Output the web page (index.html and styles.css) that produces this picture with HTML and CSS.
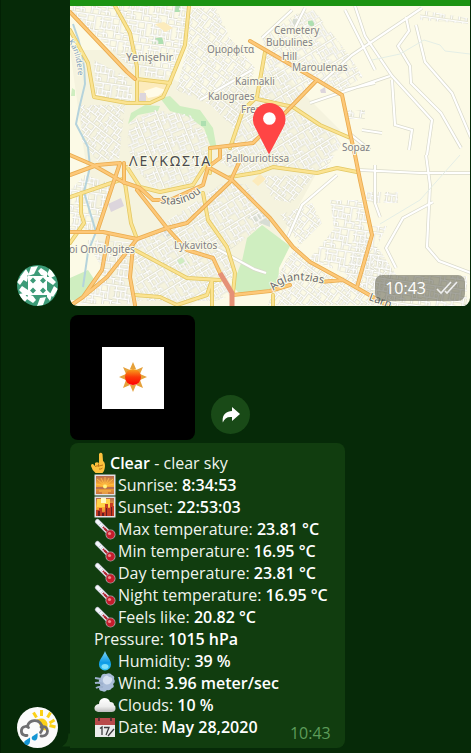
FILE: index.html
```html
<!DOCTYPE html>
<html lang="en">
<head>
<meta charset="utf-8">
<meta name="viewport" content="width=device-width, initial-scale=1">
<title>Weather chat</title>
<link rel="stylesheet" href="styles.css">
</head>
<body>
<svg class="defs" aria-hidden="true">
  <defs>
    <linearGradient id="sky" x1="0" y1="0" x2="0" y2="1"><stop offset="0" stop-color="#b5694f"/><stop offset=".5" stop-color="#ffb02e"/><stop offset="1" stop-color="#c7723e"/></linearGradient>
    <linearGradient id="sunGrad" x1="0" y1="0" x2="0" y2="1"><stop offset="0" stop-color="#f7a51c"/><stop offset=".5" stop-color="#fb3a08"/><stop offset="1" stop-color="#f00"/></linearGradient>
    <linearGradient id="dropGrad" x1="0" y1="0" x2="0" y2="1"><stop offset="0" stop-color="#7fd6f7"/><stop offset=".6" stop-color="#0d9be6"/><stop offset="1" stop-color="#35c3f5"/></linearGradient>
    <linearGradient id="cloudGrad" x1="0" y1="0" x2="0" y2="1"><stop offset="0" stop-color="#fff"/><stop offset=".6" stop-color="#ededed"/><stop offset="1" stop-color="#bdbdbd"/></linearGradient>
    <symbol id="thermo" viewBox="0 0 22 22">
      <path d="M3.500 3.500 14 14" stroke="#b8bcc6" stroke-width="5" stroke-linecap="round"/>
      <path d="M3.500 3.500 14 14" stroke="#f4f6fb" stroke-width="3.600" stroke-linecap="round"/>
      <path d="M9 9l6 6" stroke="#b3202d" stroke-width="2.200"/>
      <path d="M5 7l2-2M7 9l2-2M9 11l2-2" stroke="#b9bfd0" stroke-width=".7"/>
      <circle cx="16.500" cy="16.500" r="5" fill="#a9a3a8"/><circle cx="16.500" cy="16.500" r="4.200" fill="#c51c2c"/>
      <circle cx="15.500" cy="15.500" r="1.600" fill="#f08a8c"/>
    </symbol>
  </defs>
</svg>
<main class="chat">
  <section class="group">
    <svg class="avatar" viewBox="0 0 41 41" role="img" aria-label="User avatar">
      <clipPath id="round"><circle cx="20.500" cy="20.500" r="20.500"/></clipPath>
      <g clip-path="url(#round)">
        <path fill="#3d9b78" d="M0 0h41v41H0z"/>
        <g fill="#fff">
          <path d="M11 11h19v19H11z"/>
          <path d="M14 2l7-1-4 8-6 2zM24 3l6 4 0 5-6-2-3-4zM33 3l5 8-5 2-3-4zM9 4l3 5-5 5-4-2zM29 12h5l5 5-3 3-6-4zM37 21l4 3-5 8-3-3zM30 25l5 5-2 6-3-4zM26 40l-6 1 3-8 6-1zM16 38l-6-4 1-5 5 2 3 4zM7 38l-5-9 5-1 4 5zM11 30H7l-5-5 3-4 6 4zM3 20l-3-3 5-7 3 3zM10 17l-5-3 3-6 3 4z"/>
        </g>
        <path fill="#3d9b78" d="M16 12.500l3 3-3 3-3-3zM26 12.500l3 3-3 3-3-3zM16 22.500l3 3-3 3-3-3zM26 22.500l3 3-3 3-3-3z"/>
      </g>
    </svg>
    <div class="stack">
      <figure class="location">
        <svg class="map" viewBox="70 6 400 300" preserveAspectRatio="xMidYMid slice" role="img" aria-label="Map of Nicosia">
          <defs>
            <pattern id="st" width="30" height="26" patternUnits="userSpaceOnUse">
              <path d="M0 2h30M0 7h14M14 11h10M0 16h18M18 20h12M0 22h10M3 2v14M9 7v9M14 2v14M19 11v15M6 16v10M24 2v18M10 22v6M28 20v6" fill="none" stroke="#d3d3c2" stroke-width="3"/>
              <path d="M0 2h30M0 7h14M14 11h10M0 16h18M18 20h12M0 22h10M3 2v14M9 7v9M14 2v14M19 11v15M6 16v10M24 2v18M10 22v6M28 20v6" fill="none" stroke="#fff" stroke-width="1.700"/>
            </pattern>
            <pattern id="st1" href="#st" patternTransform="rotate(8) scale(.85)"/>
            <pattern id="st2" href="#st" patternTransform="rotate(-32) scale(.8)"/>
            <pattern id="st3" href="#st" patternTransform="rotate(38) scale(.75)"/>
            <pattern id="st4" href="#st" patternTransform="rotate(68) scale(.8)"/>
            <path id="minor" d="M355 6l10 30 27 40 40 44-5 35M422 8l-70 47-30 27M406 17l3 14-11 15 12 20 1 17 30 30 20 35M416 25l9 37 27 31 19 45M350 140v-6l20 16M310 103l80-27M426 155l4 30-3 62 12 14 32 12M360 170l60 3 50 0M433 202l-30 16-17 30 10 20M392 80l3 45 17 5-3 20M375 165v38l5 14M200 100l52-30M362 130l20 3M345 90l30-7M210 245l44 24 12 4M337 175l-35 30-14 32M345 10l30 60M262 38l30-28M305 8l-10 20"/>
            <path id="yellow" d="M115 6l15 27 7 34v35M189 6l-4 39-15 37-7 15-13 6h-23l-33-6-6-34-18-33M137 79l33 4M265 52l-8 45-14 13-13 38M257 99l36 8 27 18 28 12M127 167l13 20 20 5 33-7 14-22M125 183l6 40 6 16M135 250l52 28 33 2M135 295l25 2 17 8 30-10 5-15v26M203 193l5 27 19 27 8 26-2 20M230 177l30-5 13-5 44 6 20-5 20 4M70 197l53-18M81 193l0 20 3 10-14 20M210 148v25M273 295v11"/>
            <path id="orange" d="M70 12l57 60 8 7M250 41l67 39 25 15 8 38 5 22 5 25 12 55-15 52M210 148l43-5 10-10 22-20 32-33M70 175l27-10 23-2M70 155l23 10 30 17 17 6 13 12h17l33-15 5-18 12-9v-8M120 163l-23 69M124 163v20M70 232h33l34 7 30-11 20-5 43-41 12-26M137 190l30 38 20 22 26 8 7 15M137 239l-30 38-24 20-13 9M108 237l-6 33-19 27M133 247l-3 30 5 28M208 167l24 13 38 38 23 29 17 15 33 18 30 17 17 10M233 295l37-4 20-6M320 282l23-2"/>
            <path id="curve1" d="M160 203q24 6 44-13"/>
            <path id="curve2" d="M274 291q12-17 50-7"/>
            <path id="curve3" d="M368 300q14 5 24 9"/>
            <path id="curve4" d="M68 42q10 12 10 38"/>
          </defs>
          <path fill="#fcfae6" d="M70 6h400v300H70z"/>
          <path fill="#f5f3de" d="M70 50h60l75 50 75-30 60 60-60 110-90 66H110L95 230z"/>
          <g fill="#cfeec0">
            <path d="M247 238l15-13 28 21-11 22-1 20-38 6-8-8 10-25z"/>
            <path d="M70 278l18-8 10 15-20 15h-8zM160 98l10-2 10 10 20 4 13 18 4 22-6-2-7-20-17-12-17-5zM131 113l14-8 15 1-2 5-20 4-10 9zM175 262l6-5 9 6-9 4zM72 88l3 2v6h-4z"/>
            <path fill="#addfb0" d="M152 44v-5l10-2 2 7zM174 6h6v6h-7zM308 26v-5l6-1v6zM201 121h5v5h-5z"/>
          </g>
          <path fill="#d7ddd4" d="M247 218l12-7 11 8v8zM293 19l8-3v9l-9 1zM161 231l7-2 2 7-6 1z"/>
          <g>
            <path fill="url(#st1)" d="M70 6h44l16 28 6 38L72 13zM94 60l38 20v22l-36-6zM118 6h70l-4 39-14 35-30-5z"/>
            <path fill="url(#st3)" d="M190 8h26l14 30 25 30-12 40-8 22-24-25-35-15 12-43zM80 105l45 0-6 54-22 2-15-20z"/>
            <path fill="url(#st2)" d="M262 38l34-24 18-4 35 45 14 22-22 14-75-40zM264 50l51 30-27 30-30-14zM240 115l18-12 35 8 50 30-18 30-45-4-38 8-25-15 16-20z"/>
            <path fill="url(#st4)" d="M130 122l25-12 35 5 18 22 0 30-20 20-34 1-21-22-6-24z"/>
            <path fill="url(#st2)" d="M140 194l26 28 55-38 25 0 23 35-22 18-18 14 6 44-20 6h-78l-4-60 30-14z"/>
            <path fill="url(#st1)" d="M70 190l15-15 30 10-19 45H70zM86 240l48 2-4 62H80l23-34z"/>
            <path fill="url(#st3)" d="M262 176l52-1-22 28-20-4zM280 215l32-12 10 20-22 22zM286 260l12-14 12 18 30 18 24-50 32 48 0 25H268l6-20z"/>
            <path fill="url(#st1)" d="M330 200h32l9 35-12 44-50-20 25-30zM345 110h20v9h-18zM366 192h32v11h-32zM420 10l48 8v6l-48-4zM372 226h15l-10 20 20 30h70v30h-90l-15-20z"/>
          </g>
          <path fill="#fcebbc" d="M139 81l29 3-7 14-14 3-8-6zM155 24l9-2 9 6-8 4zM252 181l8-7 6 5-8 7z"/>
          <path fill="#fffbe8" d="M144 91l12-4 10 3-8 6-10 2z"/>
          <path fill="#dcd5dc" d="M140 93h6v8h-7zM320 90l5-3 1 6h-5zM108 204l13-6 3 8-13 6z"/>
          <g fill="none">
            <use href="#minor" stroke="#dadacb" stroke-width="3.600"/>
            <use href="#minor" stroke="#fff" stroke-width="2.200"/>
          </g>
          <path fill="none" stroke="#b5d3dc" stroke-width="2" d="M73 24q12 30 12 60l-6 25-3 15 12 23 2 20-6 25 12 40-8 20-5 35"/>
          <path fill="none" stroke="#e4eee6" d="M470 54l-25-3-5-6-16-5-24 14-28 6M460 155l-40 45-40 24"/>
          <g fill="none" stroke-linejoin="round" stroke-linecap="round">
            <use href="#yellow" stroke="#e3c864" stroke-width="4"/>
            <use href="#yellow" stroke="#fbe391" stroke-width="2.400"/>
            <use href="#orange" stroke="#e9ac4f" stroke-width="4"/>
            <use href="#orange" stroke="#fdc878" stroke-width="2.400"/>
            <path stroke="#e59176" stroke-width="5" stroke-linecap="butt" d="M220 273l6 10 6 10v13"/>
          </g>
          <g class="labels">
            <text class="town" x="126" y="61">Yenişehir</text><text x="207" y="53">Ομορφίτα</text>
            <text x="274" y="34">Cemetery</text><text x="266" y="46">Bubulines</text><text x="282" y="60">Hill</text><text x="292" y="71">Maroulenas</text>
            <text x="235" y="85">Kaimakli</text><text x="208" y="100">Kalograes</text><text x="241" y="113">Frenek</text>
            <text x="342" y="151">Sopaz</text><text x="226" y="162">Pallouriotissa</text>
            <text x="174" y="249">Lykavitos</text><text x="69" y="253">oi Omologites</text>
            <text class="city" x="129" y="166">ΛΕΥΚΩΣΊΑ</text>
            <text class="street"><textPath href="#curve1">Stasinou</textPath></text>
            <text class="street"><textPath href="#curve2">Aglantzias</textPath></text>
            <text class="street"><textPath href="#curve3">Larn</textPath></text>
            <text class="river"><textPath href="#curve4">Kanlıdere</textPath></text>
          </g>
          <path fill="#ff4545" d="M269 154.500l-13.600-26.500a16.300 16.300 0 1 1 27.600 0z"/>
          <circle cx="269.400" cy="118.500" r="6.300" fill="#fff"/>
        </svg>
        <figcaption class="stamp"><time>10:43</time>
          <svg class="ticks" viewBox="0 0 22 14" aria-hidden="true"><path d="M1 8l4 4L15 1M9 10l2 2L21 1" fill="none" stroke="#eee" stroke-width="1.600"/></svg>
        </figcaption>
      </figure>
    </div>
  </section>
  <section class="group">
    <svg class="avatar" viewBox="0 0 41 41" role="img" aria-label="Weather bot avatar">
      <circle cx="20.500" cy="20.500" r="20.500" fill="#fbfbfb"/>
      <path d="M16.500 5.500l3 5M24.500 3v6M33.500 5.500l-3 5M37.500 13l-5 3" fill="none" stroke="#fcd116" stroke-width="3"/>
      <path d="M38.500 20l-6-1.500" stroke="#fcd116" stroke-width="3"/>
      <path fill="#fcd116" d="M20 12.500q8-3 10.500 4 .5 4-1.500 7l-5-1-2-6z"/>
      <path d="M10 28.500H8a4.600 4.600 0 0 1 0-9q2-.5 3.500 1M10.500 19a7.500 7.500 0 0 1 14-1q2 4-1 7.500M24 20c4-1.500 6.500 1 6.500 4 0 4-3 5.500-6.500 5" fill="none" stroke="#6f6f72" stroke-width="2.800" stroke-linecap="round"/>
      <path fill="#1495d3" d="M20.500 26c.5 5-.5 7.500-3 7.500s-4-3-1.500-4.500zM13 30.500c.5 5-.5 7.500-3 7.500s-4-3-1.500-4.500z"/>
    </svg>
    <div class="stack">
      <div class="sticker-row">
        <div class="sticker">
          <svg class="sun" viewBox="0 0 62 62" role="img" aria-label="Sun">
            <path fill="#fff" d="M0 0h62v62H0z"/>
            <path fill="#e5a13b" d="M31 15l3 7h-6zM31 45l3-7h-6zM17 30l7-3v6zM45 30l-7-3v6zM21 20l7 3-4 4zM41 20l-3 7-4-4zM21 41l3-8 4 5zM41 41l-3-8-4 5z"/>
            <circle cx="31" cy="30" r="8" fill="url(#sunGrad)"/>
          </svg>
        </div>
        <button class="share" type="button" aria-label="Forward">
          <svg viewBox="0 0 18 16" aria-hidden="true"><path fill="#fff" d="M10 0l8 7-8 7v-4C5 9.500 2.500 11.500.800 15.500-.300 8 4 4.300 10 4z"/></svg>
        </button>
      </div>
      <article class="bubble">
        <svg class="tail" viewBox="0 0 10 16" aria-hidden="true"><path fill="#113d0f" d="M10 0v16H0q8-4 8-16z"/></svg>
        <p class="line lead"><svg class="emoji hand" viewBox="0 0 20 22" aria-hidden="true"><path fill="#fdc13c" d="M9 11V2q1.800-2.500 3.500 0L13 9q2 1 2 5-.3 5-2.500 7H5.500Q2 18 1 14q0-2.500 2-2l2 2V11q2-1.500 4 0z"/><path d="M5 14.500q2-1 4-.5l4-1M8.500 11.500v3M9 17q2 .5 3.500-1" fill="none" stroke="#bf7417" stroke-width="1"/></svg><b>Clear</b> - clear sky</p>
        <p class="line"><svg class="emoji" viewBox="0 0 22 22" aria-hidden="true"><path fill="#e3dfe5" d="M.500.500h21v21H.500z"/><path fill="url(#sky)" d="M2 2h18v18H2z"/><path d="M11 12L3 5M11 12l-4-8M11 12V3M11 12l4-8M11 12l8-7M11 12l9-2M11 12L2 10" stroke="#ffc14d" stroke-width=".8"/><path fill="#b9704f" d="M2 13h18v2H2z"/><circle cx="11" cy="12.500" r="2" fill="#fff480"/><path d="M5 17h12M8 19h6" stroke="#ffc34e"/></svg>Sunrise: <b>8:34:53</b></p>
        <p class="line"><svg class="emoji" viewBox="0 0 22 22" aria-hidden="true"><path fill="#e3dfe5" d="M.500.500h21v21H.500z"/><path fill="url(#sky)" d="M2 2h18v18H2z"/><path fill="#ffd34a" d="M3 3h13v8H3z"/><path fill="#fff9bf" d="M7 2h5v5H7z"/><path fill="#c43a24" d="M2 14h3v-2h3v4h3V8h3v4h2V7h3v3h1v10H2z"/><path fill="#651e20" d="M4 15h2v5H4zM12 12h1v8h-1zM17 11h1v9h-1zM8 17h2v3H8z"/></svg>Sunset: <b>22:53:03</b></p>
        <p class="line"><svg class="emoji" aria-hidden="true"><use href="#thermo"/></svg>Max temperature: <b>23.81 °C</b></p>
        <p class="line"><svg class="emoji" aria-hidden="true"><use href="#thermo"/></svg>Min temperature: <b>16.95 °C</b></p>
        <p class="line"><svg class="emoji" aria-hidden="true"><use href="#thermo"/></svg>Day temperature: <b>23.81 °C</b></p>
        <p class="line"><svg class="emoji" aria-hidden="true"><use href="#thermo"/></svg>Night temperature: <b>16.95 °C</b></p>
        <p class="line"><svg class="emoji" aria-hidden="true"><use href="#thermo"/></svg>Feels like: <b>20.82 °C</b></p>
        <p class="line">Pressure: <b>1015 hPa</b></p>
        <p class="line"><svg class="emoji" viewBox="0 0 22 22" aria-hidden="true"><path fill="url(#dropGrad)" d="M11 1c2 6 6 8 6 13.500a6 6 0 0 1-12 0C5 9 9 7 11 1z"/><ellipse cx="11" cy="16.500" rx="3.500" ry="2.500" fill="#7fe0fb"/></svg>Humidity: <b>39 %</b></p>
        <p class="line"><svg class="emoji" viewBox="0 0 22 22" aria-hidden="true"><path fill="#a9bcd8" d="M7 5q1-4 5-3 4-2 6 1 3 1 2 4 2 3-1 5 2 3-1 4-2 3-5 2-2 3-5 1-3 0-3-3 2-2 1-4-3-3 1-7z"/><path fill="#d5e0f0" d="M10 5q3-3 5 0 4 0 3 4-3 5-7 3-4-3-1-7z"/><path d="M1 6l6 1M1 11q4-1 8 1M2 16q3-2 7-1" fill="none" stroke="#9db0cd" stroke-width="2"/></svg>Wind: <b>3.96 meter/sec</b></p>
        <p class="line"><svg class="emoji" viewBox="0 0 22 22" aria-hidden="true"><path fill="url(#cloudGrad)" d="M4 18q-4-1-3.500-4.500Q1.500 10 5 10q0-5 5-6 5 0 6 4 4 0 4 3 2 1 1.500 4-.5 3-4 3z"/></svg>Clouds: <b>10 %</b></p>
        <p class="line"><svg class="emoji" viewBox="0 0 22 22" aria-hidden="true"><path fill="#ececec" d="M1 2h20v19H1z"/><path fill="#b84a4a" d="M1 2h20v7H1z"/><path d="M5 1v4M17 1v4" stroke="#41292c" stroke-width="1.600"/><path d="M6 12.500l2-1.500v8M10 11.500h5l-3 7.500M14 20l6-7" fill="none" stroke="#3d3d3f" stroke-width="1.300"/></svg>Date: <b>May 28,2020</b></p>
        <time class="sent">10:43</time>
      </article>
    </div>
  </section>
</main>
</body>
</html>
```
FILE: styles.css
```css
* { box-sizing: border-box; }

body {
  margin: 0;
  background: #062a08;
  color: #f0f4ee;
  font: 16px/22px "Open Sans", "Noto Sans", sans-serif;
}

.defs { position: absolute; width: 0; height: 0; }

.chat {
  display: flex;
  flex-direction: column;
  gap: 9px;
  padding: 0 1px 5px 0;
  border-left: 1px solid #032005;
}

.group {
  display: flex;
  align-items: flex-end;
  gap: 12px;
  padding-left: 16px;
}

.avatar { flex: none; width: 41px; height: 41px; }

.stack { flex: 1; min-width: 0; }

.location {
  position: relative;
  max-width: 400px;
  margin: 0;
  border-top: 6px solid #1c9312;
  border-radius: 0 0 8px 8px;
  overflow: hidden;
}

.map { display: block; width: 100%; aspect-ratio: 4 / 3; }

.labels {
  font: 10px "Noto Sans", sans-serif;
  fill: #808086;
  stroke: #fcfae6;
  stroke-width: 2px;
  stroke-linejoin: round;
  paint-order: stroke;
}

.labels .town { font-size: 11px; }
.labels .city { font-size: 14px; letter-spacing: 2px; fill: #4a4a4e; }
.labels .street { font-size: 11px; fill: #68686c; }
.labels .river { font-size: 8px; fill: #7d9fc0; }

.stamp {
  position: absolute;
  right: 5px;
  bottom: 5px;
  display: flex;
  align-items: center;
  gap: 10px;
  height: 26px;
  padding: 0 7px 0 10px;
  border-radius: 7px;
  background: rgba(92, 92, 78, 0.55);
  color: #fff;
}

.ticks { width: 22px; height: 14px; }

.sticker-row { display: flex; align-items: flex-end; gap: 16px; margin-bottom: 3px; }

.sticker {
  display: grid;
  place-items: center;
  width: 125px;
  height: 125px;
  border-radius: 8px;
  background: #000;
}

.sun { width: 62px; height: 62px; }

.share {
  display: grid;
  place-items: center;
  width: 39px;
  height: 39px;
  margin-bottom: 6px;
  padding: 0;
  border: 0;
  border-radius: 50%;
  background: #194a17;
}

.share svg { width: 18px; height: 16px; }

.bubble {
  position: relative;
  width: fit-content;
  padding: 9px 17px 10px 24px;
  border-radius: 8px 8px 8px 0;
  background: #113d0f;
}

.tail { position: absolute; right: 100%; bottom: 0; width: 8px; height: 16px; }

.line { display: flex; align-items: center; height: 22px; margin: 0; white-space: pre; }
.line b { font-weight: 600; color: #fff; }
.lead { margin-left: -4px; }

.emoji { flex: none; width: 22px; height: 22px; margin-right: 2px; }
.hand { width: 20px; margin-right: 0; }

.sent { position: absolute; right: 14px; bottom: 4px; color: #5d9c5a; }
```
